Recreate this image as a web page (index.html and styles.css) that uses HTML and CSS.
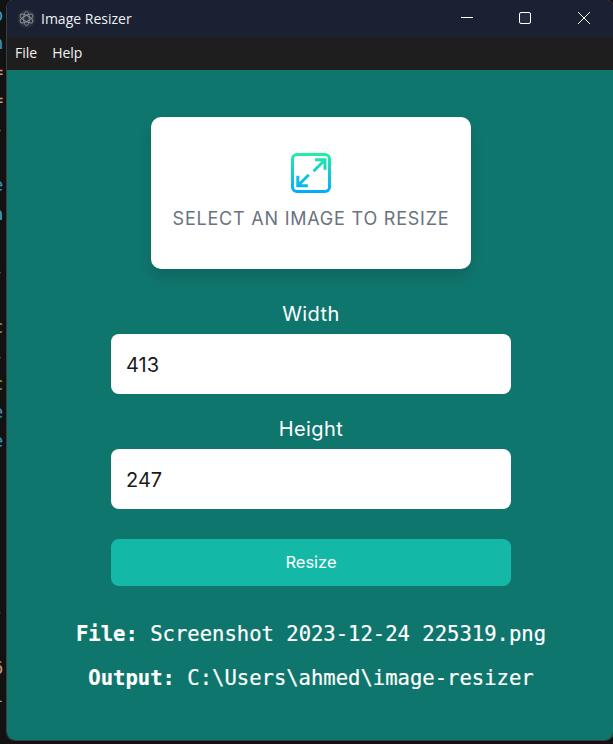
FILE: index.html
```html
<!DOCTYPE html>
<html lang="en">
<head>
<meta charset="utf-8">
<title>Image Resizer</title>
<link rel="stylesheet" href="styles.css">
</head>
<body>
<div class="desktop">
  <div class="editor" aria-hidden="true">
    <div class="line blue">o</div>
    <div class="line blue">n</div>
    <div class="line tan">=</div>
    <div class="line tan">=</div>
    <div class="line gold">-</div>
    <div class="line"></div>
    <div class="line blue">e</div>
    <div class="line blue">a</div>
    <div class="line"></div>
    <div class="line grey">-</div>
    <div class="line"></div>
    <div class="line gold">c</div>
    <div class="line grey">-</div>
    <div class="line gold">c</div>
    <div class="line blue">e</div>
    <div class="line blue">e</div>
    <div class="line"></div>
    <div class="line"></div>
    <div class="line"></div>
    <div class="line"></div>
    <div class="line"></div>
    <div class="line blue">-</div>
    <div class="line"></div>
    <div class="line tan">6</div>
    <div class="line tan">l</div>
  </div>
  <div class="window">
    <header class="titlebar">
      <svg class="app-icon" viewBox="0 0 20 20">
        <circle cx="10" cy="10" r="9.5" fill="#2c303c"/>
        <g fill="none" stroke="#858d98" stroke-width="1">
          <ellipse cx="10" cy="10" rx="7.5" ry="3" transform="rotate(30 10 10)"/>
          <ellipse cx="10" cy="10" rx="7.5" ry="3" transform="rotate(90 10 10)"/>
          <ellipse cx="10" cy="10" rx="7.5" ry="3" transform="rotate(150 10 10)"/>
        </g>
      </svg>
      <span class="app-title">Image Resizer</span>
      <div class="controls">
        <svg class="ctl" viewBox="0 0 58 37"><path d="M22 17.5h12" stroke="#fff" stroke-width="1"/></svg>
        <svg class="ctl" viewBox="0 0 58 37"><rect x="22.5" y="12.5" width="11" height="11" rx="1.5" fill="#262c3d" stroke="#fff" stroke-width="1"/></svg>
        <svg class="ctl" viewBox="0 0 58 37"><path d="M23 12l12 12M35 12l-12 12" stroke="#fff" stroke-width="1" fill="none"/></svg>
      </div>
    </header>
    <nav class="menubar">
      <span class="menu-item">File</span>
      <span class="menu-item">Help</span>
    </nav>
    <main class="content">
      <div class="column">
        <section class="dropzone">
          <svg class="drop-icon" viewBox="0 0 40 40">
            <defs>
              <linearGradient id="gradUser" gradientUnits="userSpaceOnUse" x1="0" y1="0" x2="0" y2="40">
                <stop offset="0" stop-color="#23f0a0"/>
                <stop offset="1" stop-color="#00aaff"/>
              </linearGradient>
            </defs>
            <g fill="none" stroke="url(#gradUser)" stroke-width="3">
              <rect x="1.5" y="1.5" width="37" height="37" rx="4.5"/>
              <path d="M24 6.8h10v10M34 6.8L22.6 18.2"/>
              <path d="M6.8 22.8v10h10M6.8 32.8L17.8 21.8"/>
            </g>
          </svg>
          <span class="drop-text">SELECT AN IMAGE TO RESIZE</span>
        </section>
        <label class="field-label">Width</label>
        <div class="field">413</div>
        <label class="field-label">Height</label>
        <div class="field">247</div>
        <button class="resize">Resize</button>
        <p class="info"><b>File:</b> Screenshot 2023-12-24 225319.png</p>
        <p class="info"><b>Output:</b> C:\Users\ahmed\image-resizer</p>
      </div>
    </main>
  </div>
</div>
</body>
</html>
```
FILE: styles.css
```css
html, body {
  margin: 0;
  padding: 0;
  height: 100%;
  overflow: hidden;
  background: #121212;
}

.desktop {
  display: flex;
  height: 744px;
  width: 613px;
  background: #121212;
}

.editor {
  width: 7px;
  flex: none;
  overflow: hidden;
  padding-top: 1px;
  font-family: "DejaVu Sans Mono", monospace;
  font-size: 17px;
}

.line {
  height: 28.4px;
  line-height: 28.4px;
  text-indent: -7px;
  white-space: nowrap;
}

.blue { color: #3b9ad6; }
.tan { color: #c79a84; }
.gold { color: #c9a24e; }
.grey { color: #8a9aa8; }

.window {
  flex: none;
  width: 606px;
  height: 740px;
  display: flex;
  flex-direction: column;
  border-radius: 8px;
  overflow: hidden;
  box-shadow: 0 0 0 1px #3a3d42;
}

.titlebar {
  height: 37px;
  flex: none;
  display: flex;
  align-items: center;
  background: #1a2133;
  padding-left: 10px;
}

.app-icon {
  width: 19px;
  height: 19px;
  margin-right: 5px;
}

.app-title {
  font-family: "Open Sans", sans-serif;
  font-size: 14px;
  color: #eef0f3;
}

.controls {
  display: flex;
  margin-left: auto;
}

.ctl {
  width: 58px;
  height: 37px;
  display: block;
}

.menubar {
  height: 33px;
  box-sizing: border-box;
  padding: 0 0 2px 8px;
  flex: none;
  display: flex;
  align-items: center;
  gap: 15px;
  background: #1e1e1e;
}

.menu-item {
  font-family: "Open Sans", sans-serif;
  font-size: 14px;
  color: #f2f2f2;
}

.content {
  flex: 1;
  display: flex;
  flex-direction: column;
  align-items: center;
  padding: 47px 0 0 2px;
  background: #0f766e;
}

.column {
  width: 400px;
  display: flex;
  flex-direction: column;
  align-items: center;
}

.dropzone {
  width: 320px;
  height: 152px;
  box-sizing: border-box;
  padding-top: 36px;
  display: flex;
  flex-direction: column;
  align-items: center;
  background: #fff;
  border-radius: 10px;
  box-shadow: 0 8px 14px rgba(0, 0, 0, 0.12);
}

.drop-icon {
  width: 40px;
  height: 40px;
  display: block;
}

.drop-text {
  margin-top: 12px;
  font-family: Inter, sans-serif;
  font-size: 18px;
  letter-spacing: 0.78px;
  line-height: 27px;
  color: #6b7280;
  white-space: nowrap;
}

.field-label {
  margin-top: 32px;
  height: 33px;
  font-family: Inter, sans-serif;
  font-size: 20px;
  letter-spacing: 0.4px;
  line-height: 27px;
  color: #fff;
}

.field + .field-label {
  margin-top: 22px;
}

.field {
  width: 100%;
  height: 60px;
  box-sizing: border-box;
  padding: 1px 0 0 15px;
  background: #fff;
  border-radius: 8px;
  font-family: Inter, sans-serif;
  font-size: 20px;
  line-height: 60px;
  color: #1a1a1a;
}

.resize {
  width: 100%;
  height: 47px;
  margin-top: 30px;
  border: 0;
  border-radius: 8px;
  background: #14b8a6;
  font-family: Inter, sans-serif;
  font-size: 16.5px;
  font-weight: 400;
  color: #fff;
  padding: 0 0 2px;
}

.info {
  margin: 0;
  height: 44px;
  font-family: "DejaVu Sans Mono", monospace;
  font-size: 20.55px;
  line-height: 44px;
  color: #fff;
  -webkit-text-stroke: 0.2px #fff;
  white-space: nowrap;
}

.resize + .info {
  margin-top: 26px;
}
```
